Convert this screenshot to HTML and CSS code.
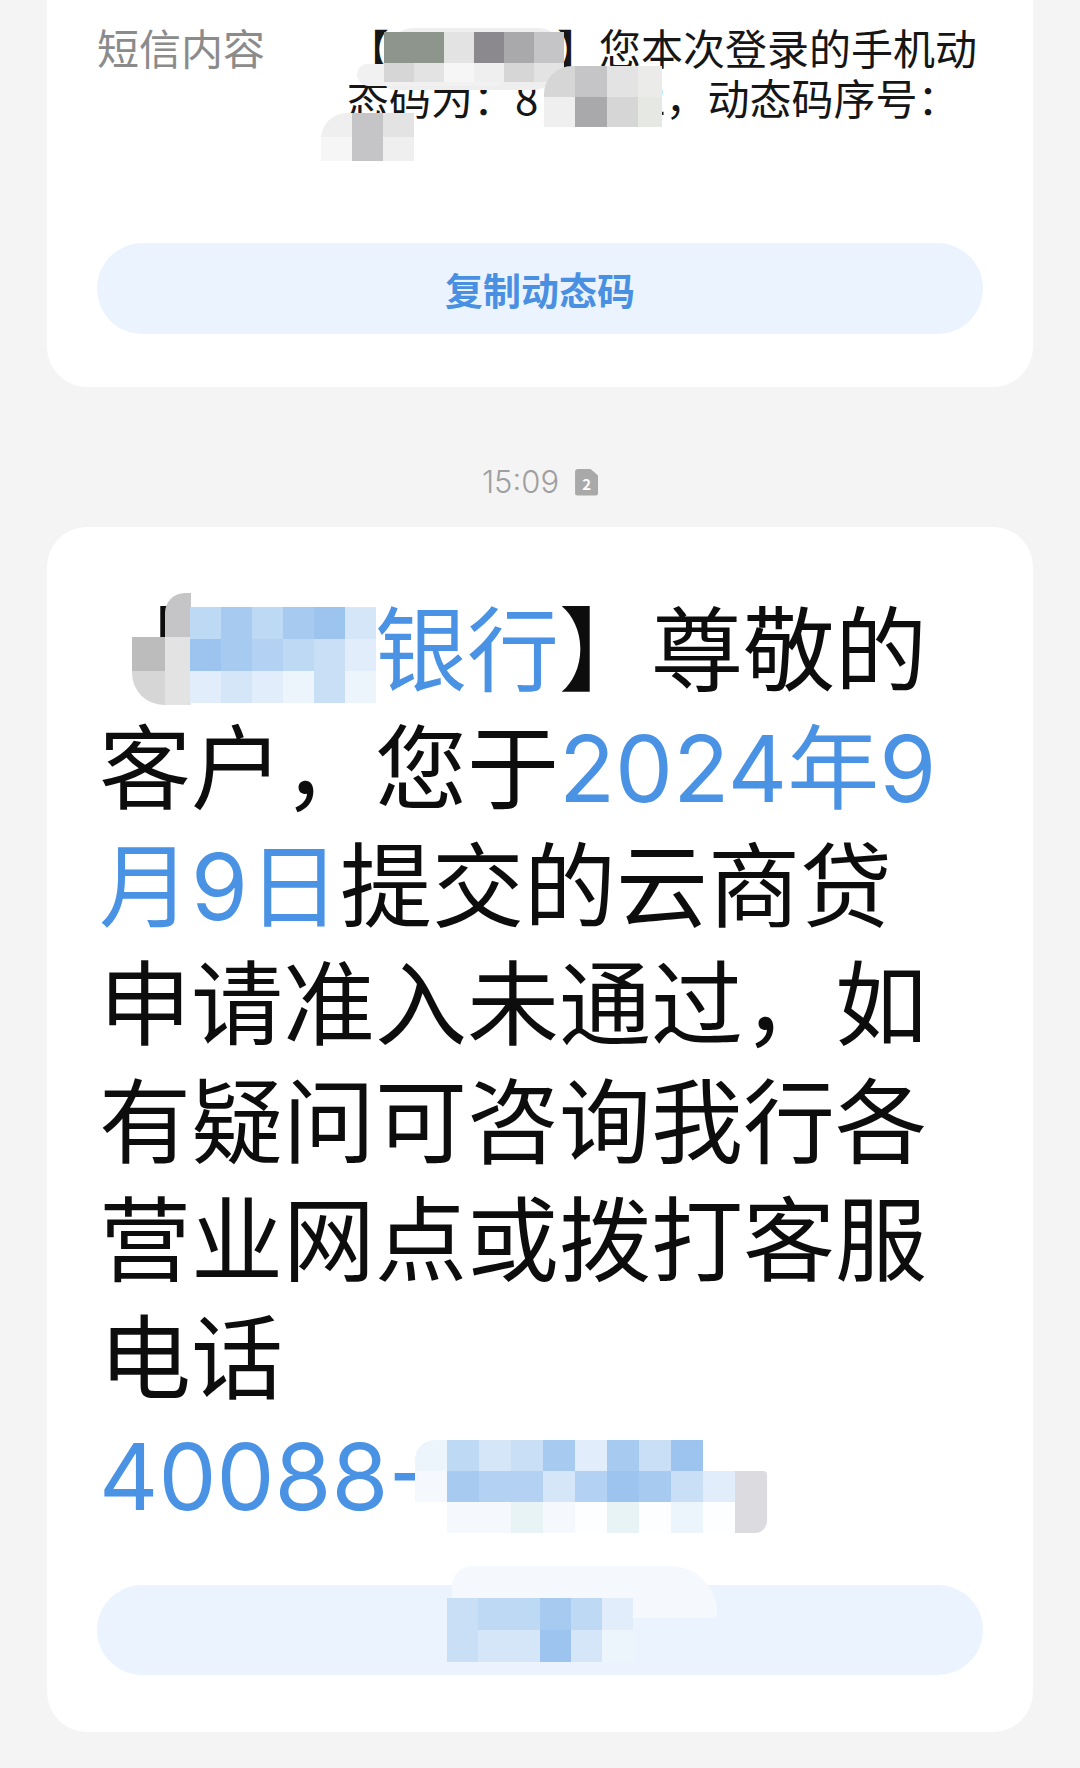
FILE: index.html
```html
<!DOCTYPE html>
<html lang="zh-CN">
<head>
<meta charset="utf-8">
<title>短信</title>
<link rel="stylesheet" href="styles.css">
</head>
<body>
<main class="thread">
  <section class="card card--top">
    <div class="sms-row">
      <div class="sms-label">短信内容</div>
      <p class="sms-text">【<span class="redact redact-sender"><span class="blob blob-sender"></span><span class="blob blob-sender2"></span><span class="mz mz-sender"><i class="g1"></i><i class="g1"></i><i class="g6"></i><i class="g2"></i><i class="g3"></i><i class="g4"></i><i class="g5"></i><i class="g6"></i><i class="g8"></i><i class="g7"></i><i class="g5"></i><i class="g6"></i></span></span>】您本次登录的手机动态码为：8<span class="redact redact-code"><span class="mz mz-code"><i class="g5"></i><i class="g4"></i><i class="g6"></i><i class="gx"></i><i class="g7"></i><i class="g3"></i><i class="g5"></i><i class="gy"></i></span></span>2，动态码序号：<span class="redact redact-serial"><span class="mz mz-serial"><i class="g7"></i><i class="g4"></i><i class="g6"></i><i class="g8"></i><i class="g4"></i><i class="g7"></i></span></span></p>
    </div>
    <button class="action" type="button">复制动态码</button>
  </section>

  <div class="stamp"><span class="stamp-time">15:09</span><span class="sim">2</span></div>

  <section class="card card--main">
    <p class="msg">【<span class="redact redact-bank"><span class="mz mz-bankblob"><i class="t"></i><i class="g4 r-tl"></i><i class="g35"></i><i class="g6"></i><i class="g5"></i><i class="g6"></i></span><span class="mz mz-bank"><i class="b4"></i><i class="b2"></i><i class="b4"></i><i class="b2"></i><i class="b1"></i><i class="b6"></i><i class="b1"></i><i class="b2"></i><i class="b3"></i><i class="b4"></i><i class="b5"></i><i class="b7"></i><i class="b7"></i><i class="b6"></i><i class="b7"></i><i class="b8"></i><i class="b5"></i><i class="b8"></i></span></span><span class="hl">银行</span>】尊敬的客户，您于<span class="hl">2024年9月9日</span>提交的云商贷申请准入未通过，如有疑问可咨询我行各营业网点或拨打客服电话<br><span class="hl phone">40088-<span class="mz mz-phone"><i class="b8 r-tl"></i><i class="b4"></i><i class="b6"></i><i class="b5"></i><i class="b2"></i><i class="b7"></i><i class="b2"></i><i class="b5"></i><i class="b1"></i><i class="t"></i><i class="t"></i><i class="b9"></i><i class="b2"></i><i class="b3"></i><i class="b3"></i><i class="b6"></i><i class="b3"></i><i class="b1"></i><i class="b2"></i><i class="b5"></i><i class="b7"></i><i class="gp r-tr"></i><i class="t"></i><i class="b9"></i><i class="b9"></i><i class="bg"></i><i class="b9"></i><i class="w"></i><i class="bg"></i><i class="w"></i><i class="b8"></i><i class="w"></i><i class="gp r-br"></i></span></span></p>
    <button class="action" type="button"><span class="mz-btn"><i class="b5"></i><i class="b4"></i><i class="b4"></i><i class="b2"></i><i class="b4"></i><i class="b7"></i><i class="b5"></i><i class="b6"></i><i class="b6"></i><i class="b1"></i><i class="b6"></i><i class="b8"></i></span></button>
  </section>
</main>
</body>
</html>
```

FILE: styles.css
```css
* { box-sizing: border-box; }

html, body {
  margin: 0;
  padding: 0;
}

body {
  width: 1080px;
  height: 1768px;
  overflow: hidden;
  background: #f4f4f4;
  font-family: "Noto Sans CJK SC", "Noto Sans", sans-serif;
}

.thread {
  padding: 0 47px;
}

.card {
  background: #ffffff;
  border-radius: 40px;
  padding: 65px 50px 57px;
}

.card--top {
  border-top-left-radius: 0;
  border-top-right-radius: 0;
  padding-top: 22px;
  padding-bottom: 53px;
}

.sms-row {
  display: flex;
  align-items: flex-start;
}

.sms-label {
  flex: none;
  width: 250px;
  font-size: 42px;
  line-height: 50px;
  color: #8b8b8b;
}

.sms-text {
  flex: none;
  width: 640px;
  margin: 0;
  font-size: 42px;
  line-height: 50px;
  color: #161616;
}

.action {
  display: flex;
  align-items: center;
  justify-content: center;
  width: 100%;
  height: 91px;
  padding: 0;
  border: 0;
  border-radius: 46px;
  background: #ebf4fe;
  font-family: inherit;
  font-size: 38px;
  font-weight: 700;
  color: #4a90e2;
}

.card--top .action {
  margin-top: 71px;
}

.card--main .action {
  margin-top: 49px;
  height: 90px;
}

.stamp {
  display: flex;
  align-items: center;
  justify-content: center;
  height: 40px;
  margin: 75px 0 25px;
}

.stamp-time {
  font-family: Inter, "Noto Sans", sans-serif;
  font-weight: 300;
  font-size: 31px;
  line-height: 40px;
  color: #9f9f9f;
}

.sim {
  display: flex;
  align-items: center;
  justify-content: center;
  width: 23px;
  height: 27px;
  margin-left: 16px;
  padding-top: 2px;
  border-radius: 3px;
  background: #a9a9a9;
  color: #ffffff;
  font-size: 15px;
  font-weight: 700;
  line-height: 1;
  clip-path: polygon(0 0, 65% 0, 100% 26%, 100% 100%, 0 100%);
}

.msg {
  width: 845px;
  margin: 0 0 0 2px;
  font-family: Inter, "Noto Sans CJK SC", sans-serif;
  font-size: 92px;
  line-height: 118px;
  color: #0d0d0d;
}

.hl {
  color: #4a92e4;
}

.phone {
  display: inline-block;
  position: relative;
}

/* redaction mosaics */
.redact {
  display: inline-block;
  position: relative;
  height: 1em;
  vertical-align: top;
}

.redact-sender { width: 4em; }
.redact-code { width: 104px; }
.redact-serial { width: 46px; }
.redact-bank { width: 2em; }

.mz {
  position: absolute;
  display: grid;
}

.mz i,
.mz-btn i {
  display: block;
}

.blob {
  position: absolute;
}

.blob-sender {
  left: -5px;
  top: 6px;
  width: 178px;
  height: 62px;
  border-radius: 30px 24px 30px 10px;
  background: #eeeeef;
}

.blob-sender2 {
  left: -32px;
  top: 42px;
  width: 150px;
  height: 22px;
  border-radius: 14px 0 16px 16px;
  background: #f1f1f2;
}

.mz-sender {
  left: -5px;
  top: 10px;
  grid-template-columns: repeat(6, 30px);
  grid-template-rows: 31px 19px;
}

.mz-code {
  left: 6px;
  top: -6px;
  grid-template-columns: 31px 32px 31px 24px;
  grid-template-rows: 31px 30px;
  border-top-left-radius: 28px;
  overflow: hidden;
}

.mz-serial {
  left: -26px;
  top: -9px;
  grid-template-columns: repeat(3, 31px);
  grid-template-rows: 24px 24px;
  border-top-left-radius: 26px;
  overflow: hidden;
}

.mz-bankblob {
  left: -59px;
  top: 1px;
  grid-template-columns: 33px 26px;
  grid-template-rows: 44px 34px 34px;
  border-radius: 28px 0 0 32px;
  overflow: hidden;
}

.mz-bank {
  left: -1px;
  top: 15px;
  grid-template-columns: repeat(6, 31px);
  grid-template-rows: repeat(3, 32px);
}

.mz-phone {
  left: 316px;
  top: 22px;
  grid-template-columns: repeat(11, 32px);
  grid-template-rows: repeat(3, 31px);
}

.mz-btn {
  position: relative;
  display: inline-grid;
  grid-template-columns: repeat(6, 31px);
  grid-template-rows: 32px 32px;
}

.mz-btn::before {
  content: "";
  position: absolute;
  left: 5px;
  top: -32px;
  width: 265px;
  height: 52px;
  border-radius: 30px 70px 8px 8px;
  background: #f5f9fe;
}

.mz-btn i {
  position: relative;
}

.r-tl { border-top-left-radius: 20px; }
.r-tr { border-top-right-radius: 4px; }
.r-br { border-bottom-right-radius: 12px; }

/* mosaic shades */
.t  { background: transparent; }
.w  { background: #fdfeff; }
.g1 { background: #8d958d; }
.g2 { background: #8b898d; }
.g3 { background: #a9a9ab; }
.g35 { background: #bcbcbd; }
.g4 { background: #c5c5c7; }
.g5 { background: #d6d6d6; }
.g6 { background: #e3e3e3; }
.g7 { background: #efefef; }
.g8 { background: #f6f6f6; }
.gx { background: #ebece9; }
.gy { background: #e6e8e4; }
.gp { background: #dcdbe0; }
.b1 { background: #9cc4ee; }
.b2 { background: #a7cbf0; }
.b3 { background: #b3d2f3; }
.b4 { background: #bed9f4; }
.b5 { background: #c9dff6; }
.b6 { background: #d5e6f8; }
.b7 { background: #e1edfa; }
.b8 { background: #ecf4fc; }
.b9 { background: #f5f9fe; }
.bg { background: #e8f3f5; }
```
